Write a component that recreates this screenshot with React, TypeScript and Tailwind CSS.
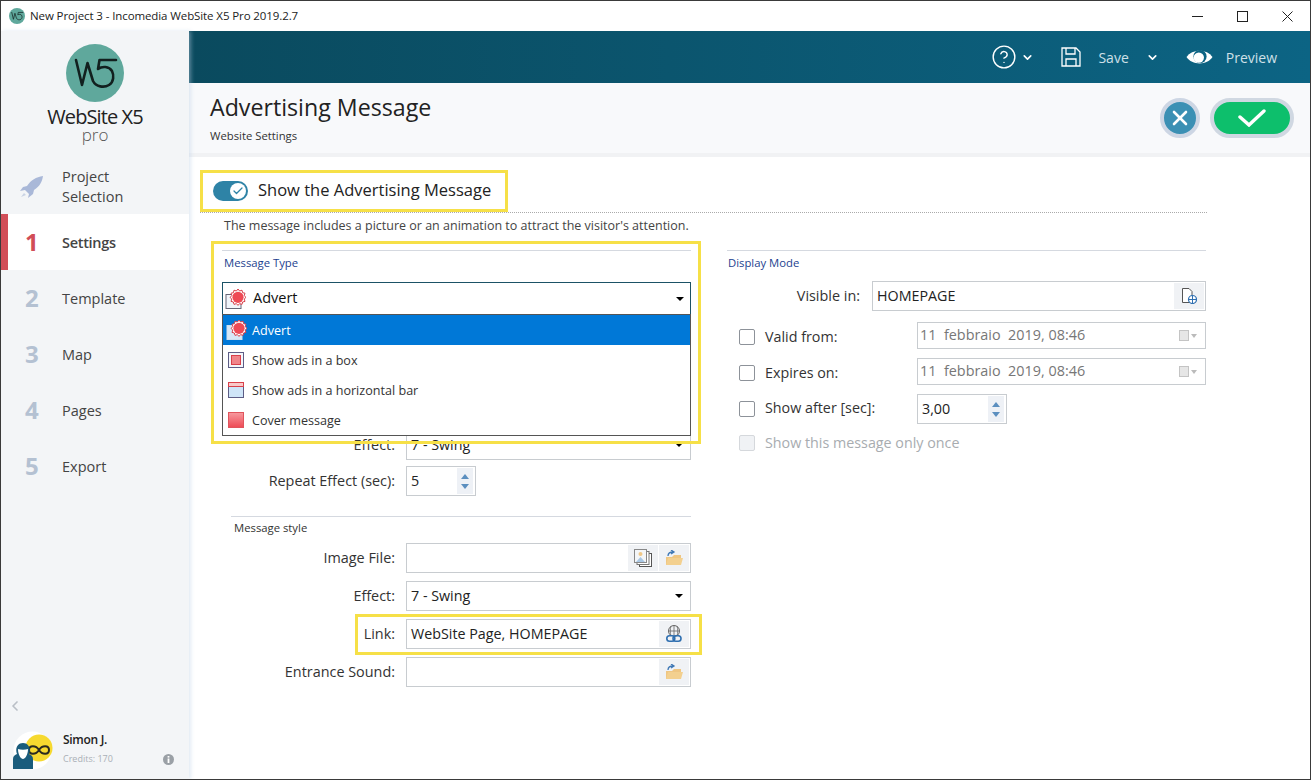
import { ChevronDown, CircleHelp, X, Check, ChevronLeft } from "lucide-react";
import type { ReactNode } from "react";

function LogoMark({ size }: { size: number }) {
  return (
    <svg width={size} height={size} viewBox="0 0 58 58">
      <circle cx="29" cy="29" r="29" fill="#5fa89c" />
      <path
        d="M10 16 L16 41 L21.5 19 L27 37 C30 43 38 44 43 41 C48 38 48 31 46 27 C43 22 36 22 32 25 L33.5 16 H50"
        fill="none"
        stroke="#12201f"
        strokeWidth="2.6"
        strokeLinecap="round"
        strokeLinejoin="round"
      />
    </svg>
  );
}

function Rocket() {
  return (
    <svg width="24" height="24" viewBox="0 0 24 24">
      <path d="M23 1 C16 2 11 5 7 11 L3 12 L0 16 L5 15 L9 19 L8 23 L13 19 L14 15 C20 11 22 7 23 1Z" fill="#a9b8d8" />
      <path d="M4 18 L1 22 L6 20Z" fill="#c9d3e4" />
    </svg>
  );
}

function FolderIcon() {
  return (
    <svg width="18" height="17" viewBox="0 0 18 17">
      <path d="M1 7 H7 L9 5 H16 V15 H1Z" fill="#efc682" />
      <path d="M1 15 L3 8 H18 L16 15Z" fill="#f3d08f" />
      <path d="M3 6 C3 3 5 2 8 2 M6 0 L9 2 L6 4" fill="none" stroke="#3f78b5" strokeWidth="1.3" />
    </svg>
  );
}

function ImageStackIcon() {
  return (
    <svg width="18" height="18" viewBox="0 0 18 18">
      <rect x="5.5" y="4.5" width="12" height="13" fill="#fff" stroke="#555" />
      <rect x="3" y="2.5" width="12" height="13" fill="#fff" stroke="#777" />
      <rect x="0.5" y="0.5" width="12" height="13" fill="#f4f6f8" stroke="#888" />
      <circle cx="6.5" cy="5" r="2" fill="#f0c888" />
      <path d="M2 13 L6.5 8 L11 13Z" fill="#a9c7e4" />
    </svg>
  );
}

function LinkIcon() {
  return (
    <svg width="16" height="18" viewBox="0 0 16 18">
      <circle cx="8" cy="6" r="5.5" fill="none" stroke="#666" />
      <path d="M2.5 6 H13.5 M8 .5 V11 M5 1 C4 4 4 8 5 11 M11 1 C12 4 12 8 11 11" fill="none" stroke="#666" strokeWidth=".8" />
      <rect x="0.8" y="10.8" width="8" height="5.5" rx="2.7" fill="#f0f2f5" stroke="#2f6fb0" strokeWidth="1.6" />
      <rect x="7" y="10.8" width="8" height="5.5" rx="2.7" fill="none" stroke="#2f6fb0" strokeWidth="1.6" />
    </svg>
  );
}

function PageWebIcon() {
  return (
    <svg width="16" height="16" viewBox="0 0 16 16">
      <path d="M1.5 .5 H8 L11 3.5 V14.5 H1.5Z" fill="#fff" stroke="#555" />
      <circle cx="11.5" cy="11.5" r="4" fill="#fff" stroke="#2f6fb0" strokeWidth="1.2" />
      <path d="M7.5 11.5 H15.5 M11.5 7.5 V15.5" stroke="#2f6fb0" />
    </svg>
  );
}

function AdvertIcon({ selected }: { selected?: boolean }) {
  return (
    <svg width="22" height="22" viewBox="0 0 22 22" className="shrink-0">
      <rect x="1" y="6.5" width="15" height="14" fill={selected ? "#d8e8f6" : "#f0f5fa"} stroke={selected ? "#cfe0f0" : "#667"} />
      <path
        d="M13 1 L14.6 3 L17 2.2 L17.6 4.7 L20 5.2 L19.2 7.6 L21 9.4 L19.2 11 L20 13.4 L17.6 14 L17 16.4 L14.6 15.6 L13 17.4 L11.4 15.6 L9 16.4 L8.4 14 L6 13.4 L6.8 11 L5 9.4 L6.8 7.6 L6 5.2 L8.4 4.7 L9 2.2 L11.4 3Z"
        fill="#fff"
        stroke="#d9404a"
      />
      <circle cx="13" cy="9.3" r="5.6" fill="#ee4a55" />
    </svg>
  );
}

function BoxIcon() {
  return (
    <svg width="16" height="16" viewBox="0 0 16 16" className="shrink-0">
      <rect x=".5" y=".5" width="15" height="15" fill="#f3f5fa" stroke="#5d5d85" />
      <rect x="3.5" y="3.5" width="9" height="9" fill="#f0848a" stroke="#d9404a" />
    </svg>
  );
}

function BarIcon() {
  return (
    <svg width="16" height="16" viewBox="0 0 16 16" className="shrink-0">
      <rect x=".5" y=".5" width="15" height="15" fill="#cfe5f8" stroke="#5d5d85" />
      <rect x=".5" y=".5" width="15" height="4" fill="#f9c9c9" stroke="#d9404a" />
    </svg>
  );
}

function CoverIcon() {
  return (
    <svg width="16" height="16" viewBox="0 0 16 16" className="shrink-0">
      <defs>
        <linearGradient id="coverFill" x1="0" y1="0" x2="0" y2="1">
          <stop offset="0" stopColor="#f79a9f" />
          <stop offset="1" stopColor="#ee4a55" />
        </linearGradient>
      </defs>
      <rect x=".5" y=".5" width="15" height="15" fill="url(#coverFill)" stroke="#e0545c" />
    </svg>
  );
}

function UserBadge() {
  return (
    <svg width="41" height="39" viewBox="0 0 41 39">
      <circle cx="20.5" cy="19.5" r="19" fill="#fff" />
      <circle cx="27" cy="17" r="13.5" fill="#f6d92f" />
      <path d="M27 19 C24 14 17 14 17 19 C17 24 24 24 27 19 C30 14 37 14 37 19 C37 24 30 24 27 19Z" fill="none" stroke="#2a2a20" strokeWidth="2" />
      <path d="M1 38 V28 C1 25 3 24 5 23 C3 18 5 12 11 12 C17 12 19 18 17 23 C19 24 21 25 21 28 V38Z" fill="#1a5c7c" />
      <path d="M6 18 C6 24 9 28 11 28 C13 28 16 24 16 18 C13 19 9 19 6 18Z" fill="#fff" />
    </svg>
  );
}

function InfoDot() {
  return (
    <svg width="11" height="11" viewBox="0 0 11 11" className="shrink-0">
      <circle cx="5.5" cy="5.5" r="5.5" fill="#9aa0a6" />
      <rect x="4.6" y="2" width="1.8" height="1.6" fill="#fff" />
      <rect x="4.6" y="4.5" width="1.8" height="4.5" fill="#fff" />
    </svg>
  );
}

function EyeIcon() {
  return (
    <svg width="27" height="18" viewBox="0 0 27 18" className="ml-[27px]">
      <path d="M.5 9 C6 .5 21 .5 26.5 9 C21 17.5 6 17.5 .5 9Z" fill="#fff" />
      <circle cx="14" cy="8.5" r="6.6" fill="#0c6484" />
      <circle cx="12.8" cy="9.6" r="5.2" fill="#fff" />
    </svg>
  );
}

function Stepper() {
  return (
    <div className="flex h-[26px] w-[16px] flex-col items-center justify-center gap-[5px] bg-[#eef1f6]">
      <div className="h-0 w-0 border-x-[4px] border-b-[5px] border-x-transparent border-b-[#5b8fbf]" />
      <div className="h-0 w-0 border-x-[4px] border-t-[5px] border-x-transparent border-t-[#5b8fbf]" />
    </div>
  );
}

function Caret() {
  return <div className="h-0 w-0 border-x-[4px] border-t-[4px] border-x-transparent border-t-black" />;
}

function IconBtn({ children }: { children: ReactNode }) {
  return <div className="flex h-[26px] w-[30px] items-center justify-center bg-[#f0f2f5]">{children}</div>;
}

function Row({ label, children, className = "" }: { label: string; children: ReactNode; className?: string }) {
  return (
    <div className={`flex h-[30px] items-center gap-[11px] ${className}`}>
      <div className="w-[173px] pb-[1px] text-right text-[14.4px] text-[#333]">{label}</div>
      {children}
    </div>
  );
}

function Field({ children, value }: { children?: ReactNode; value?: string }) {
  return (
    <div className="flex h-[30px] w-[285px] items-center justify-between border border-[#c8ccd0] pr-px pl-1 text-[14.3px] text-[#222]">
      <span className="pb-[1px]">{value}</span>
      <div className="flex gap-px">{children}</div>
    </div>
  );
}

function DateRow({ label }: { label: string }) {
  return (
    <div className="flex h-[27px] items-center">
      <div className="mt-[2px] ml-[12px] h-4 w-4 rounded-[2px] border border-[#8d9299] bg-white" />
      <div className="ml-[10px] w-[152px] pt-[2px] text-[14.3px] text-[#333]">{label}</div>
      <div className="flex h-[27px] w-[289px] items-center justify-between border border-[#c8ccd0] pr-2 pl-[2px] text-[14.4px] text-[#777]">
        <span className="pb-[1px] whitespace-pre">11  febbraio  2019, 08:46</span>
        <div className="flex items-center gap-[2px]">
          <div className="h-[11px] w-[10px] border border-[#c4c4c4] bg-[#e6e6e6]" />
          <div className="h-0 w-0 border-x-[3px] border-t-[4px] border-x-transparent border-t-[#bbb]" />
        </div>
      </div>
    </div>
  );
}

const steps = [
  { n: "1", label: "Settings", active: true },
  { n: "2", label: "Template" },
  { n: "3", label: "Map" },
  { n: "4", label: "Pages" },
  { n: "5", label: "Export" },
];

export default function App() {
  return (
    <div className="flex h-[780px] w-[1311px] flex-col overflow-hidden border border-[#3a3a3a] bg-white [font-family:'Open_Sans','Noto_Sans',sans-serif]">
      {/* title bar */}
      <div className="flex h-[30px] shrink-0 items-center pl-2 text-[11.5px] tracking-[-0.1px] text-[#222]">
        <LogoMark size={16} />
        <span className="ml-[5px]">New Project 3 - Incomedia WebSite X5 Pro 2019.2.7</span>
        <div className="ml-auto flex items-center gap-[34px] pr-[17px]">
          <svg width="11" height="11" viewBox="0 0 11 11" stroke="#222" fill="none"><path d="M0 5.5 H11" /></svg>
          <svg width="11" height="11" viewBox="0 0 11 11" stroke="#222" fill="none"><rect x=".5" y=".5" width="10" height="10" /></svg>
          <svg width="11" height="11" viewBox="0 0 11 11" stroke="#222" fill="none"><path d="M.5 .5 L10.5 10.5 M10.5 .5 L.5 10.5" /></svg>
        </div>
      </div>

      <div className="flex min-h-0 flex-1">
        {/* sidebar */}
        <div className="z-10 flex w-[188px] shrink-0 flex-col bg-[#f3f5f7] shadow-[2px_0_4px_rgba(190,210,230,0.45)]">
          <div className="flex h-[126px] flex-col items-center pt-[13px]">
            <LogoMark size={58} />
            <div className="mt-[4px] text-[20px] leading-[22px] tracking-[-0.9px] text-[#222]">WebSite X5</div>
            <div className="text-[17px] leading-[14px] font-light text-[#555]">pro</div>
          </div>
          <div className="flex h-[57px] items-center pt-[2px] pl-[19px] text-[14.5px] leading-[20px] text-[#444]">
            <Rocket />
            <div className="ml-[18px]">
              Project
              <br />
              Selection
            </div>
          </div>
          {steps.map((s) => (
            <div
              key={s.n}
              className={`flex h-[56px] items-center text-[14.5px] ${
                s.active ? "border-l-[7px] border-[#d14d57] bg-white font-semibold tracking-[-0.3px] text-[#444]" : "pl-[7px] text-[#444]"
              }`}
            >
              <div className={`w-[54px] pl-[17px] text-[24px] font-bold ${s.active ? "text-[#d14d57]" : "text-[#b4c1d2]"}`}>{s.n}</div>
              <span className="pt-[2px]">{s.label}</span>
            </div>
          ))}
          <div className="mt-auto pb-[9px] pl-[6px]">
            <ChevronLeft size={16} strokeWidth={2.5} className="text-[#b9bfc6]" />
            <div className="mt-[17px] flex items-center pl-[5px]">
              <UserBadge />
              <div className="ml-[10px] flex-1 pr-[15px] pb-[3px]">
                <div className="text-[12px] leading-[16px] font-semibold tracking-[-0.3px] text-[#222]">Simon J.</div>
                <div className="mt-[4px] flex items-center justify-between text-[9px] leading-[14px] text-[#aab0b6]">
                  Credits: 170
                  <InfoDot />
                </div>
              </div>
            </div>
          </div>
        </div>

        {/* main */}
        <div className="flex min-w-0 flex-1 flex-col">
          <div className="flex h-[52px] shrink-0 items-center justify-end bg-gradient-to-r from-[#0a4a5e] to-[#0c6484] pr-[33px] text-[14px] text-[#cfe0e8]">
            <CircleHelp size={26} strokeWidth={1.3} className="text-white" />
            <ChevronDown size={13} strokeWidth={3} className="ml-[4px] text-white" />
            <svg width="20" height="20" viewBox="0 0 20 20" className="ml-[27px]" fill="none" stroke="#fff" strokeWidth="1.3">
              <path d="M1 1 H15 L19 5 V19 H1Z M5 1 V7 H14 V1 M5 19 V12 H15 V19" />
            </svg>
            <span className="ml-[17px]">Save</span>
            <ChevronDown size={13} strokeWidth={3} className="ml-[17px] text-white" />
            <EyeIcon />
            <span className="ml-[13px]">Preview</span>
          </div>

          <div className="flex h-[74px] shrink-0 items-center justify-between border-b-[4px] border-[#f1f2f4] bg-[#f8f9fb] pr-[16px] pl-[21px]">
            <div className="-mt-[2px]">
              <div className="text-[23.2px] leading-[30px] text-[#222]">Advertising Message</div>
              <div className="mt-[6px] text-[11.3px] leading-[15px] text-[#333]">Website Settings</div>
            </div>
            <div className="flex items-center gap-[10px]">
              <div className="flex h-[40px] w-[40px] items-center justify-center rounded-full border-[4px] border-[#cdd6e4] bg-[#3b90b4]">
                <X size={24} strokeWidth={2.6} className="text-white" />
              </div>
              <div className="flex h-[40px] w-[84px] items-center justify-center rounded-full border-[4px] border-[#d0d8e2] bg-[#0dbf6c]">
                <svg width="28" height="18" viewBox="0 0 28 18" fill="none" stroke="#fff" strokeWidth="3.4" strokeLinecap="round">
                  <path d="M2 8 L11 16 L26 2" />
                </svg>
              </div>
            </div>
          </div>

          <div className="min-h-0 flex-1 pt-[13px] pl-[11px]">
            <div className="flex h-[42px] w-[308px] items-center border-[3px] border-[#f6e047] pl-[10px] text-[16.5px] text-[#222]">
              <div className="relative h-5 w-[35px] rounded-full bg-[#2e83a6]">
                <div className="absolute top-[2px] right-[2px] flex h-4 w-4 items-center justify-center rounded-full bg-white">
                  <Check size={12} strokeWidth={2.5} className="text-[#2e83a6]" />
                </div>
              </div>
              <span className="ml-[10px] pb-[2px]">Show the Advertising Message</span>
            </div>
            <div className="w-[1007px] border-t border-dotted border-[#aaa]" />
            <div className="mt-[4px] pl-[24px] text-[12.5px] leading-[17px] text-[#444]">
              The message includes a picture or an animation to attract the visitor's attention.
            </div>

            <div className="mt-[16px] flex">
              {/* left column */}
              <div className="ml-[22px] w-[469px]">
                <div className="relative">
                  <div className="absolute -top-[9px] -right-[10px] -left-[11px] z-20 h-[203px] border-[3px] border-[#f6e047]" />
                  <div className="border-t border-[#d5d9e0] pt-[4px] pl-[2px] text-[11.3px] leading-[16px] text-[#1d3f8f]">Message Type</div>
                  <div className="mt-[11px] flex h-[33px] items-center justify-between border border-[#1b5266] pr-[6px] pl-[2px] text-[14.5px] text-[#111]">
                    <div className="flex items-center gap-[6px]">
                      <AdvertIcon />
                      <span className="pb-[2px]">Advert</span>
                    </div>
                    <Caret />
                  </div>
                  <div className="absolute top-[64px] right-0 left-0 z-10 border border-[#555] bg-white text-[12.6px] text-[#333]">
                    <div className="flex h-[30px] items-center gap-[4px] bg-[#0078d7] pl-[3px] text-white">
                      <AdvertIcon selected />
                      <span className="pt-[2px]">Advert</span>
                    </div>
                    <div className="flex h-[30px] items-center gap-[8px] pl-[5px]"><BoxIcon /><span className="pt-[2px]">Show ads in a box</span></div>
                    <div className="flex h-[30px] items-center gap-[8px] pl-[5px]"><BarIcon /><span className="pt-[2px]">Show ads in a horizontal bar</span></div>
                    <div className="flex h-[30px] items-center gap-[8px] pl-[5px]"><CoverIcon /><span className="pt-[2px]">Cover message</span></div>
                  </div>
                </div>

                <Row label="Effect:" className="mt-[115px]">
                  <Field value="7 - Swing"><div className="mr-[6px]"><Caret /></div></Field>
                </Row>
                <Row label="Repeat Effect (sec):" className="mt-[6px]">
                  <div className="flex h-[30px] w-[70px] items-center justify-between border border-[#c8ccd0] pr-[2px] pl-1 text-[14.3px] text-[#222]">
                    <span className="pb-[1px]">5</span>
                    <Stepper />
                  </div>
                </Row>

                <div className="mt-[20px] ml-[9px] border-t border-[#d5d9e0] pt-[3px] pl-[3px] text-[11.3px] leading-[16px] text-[#333]">Message style</div>
                <Row label="Image File:" className="mt-[7px]">
                  <Field>
                    <IconBtn><ImageStackIcon /></IconBtn>
                    <IconBtn><FolderIcon /></IconBtn>
                  </Field>
                </Row>
                <Row label="Effect:" className="mt-[8px]">
                  <Field value="7 - Swing"><div className="mr-[6px]"><Caret /></div></Field>
                </Row>
                <div className="relative mt-[8px]">
                  <div className="absolute -top-[5px] right-[-11px] left-[133px] h-[41px] border-[3px] border-[#f6e047]" />
                  <Row label="Link:">
                    <Field value="WebSite Page, HOMEPAGE">
                      <IconBtn><LinkIcon /></IconBtn>
                    </Field>
                  </Row>
                </div>
                <Row label="Entrance Sound:" className="mt-[8px]">
                  <Field>
                    <IconBtn><FolderIcon /></IconBtn>
                  </Field>
                </Row>
              </div>

              {/* right column */}
              <div className="ml-[36px] w-[479px]">
                <div className="border-t border-[#d5d9e0] pt-[4px] pl-px text-[11.3px] leading-[16px] text-[#1d3f8f]">Display Mode</div>
                <div className="mt-[10px] flex h-[30px] items-center">
                  <div className="w-[133px] pb-[1px] text-right text-[14.4px] text-[#333]">Visible in:</div>
                  <div className="ml-[12px] flex h-[30px] w-[334px] items-center justify-between border border-[#c8ccd0] pr-px pl-1 text-[14.3px] text-[#222]">
                    <span className="pb-[1px]">HOMEPAGE</span>
                    <IconBtn><PageWebIcon /></IconBtn>
                  </div>
                </div>
                <div className="mt-[11px]"><DateRow label="Valid from:" /></div>
                <div className="mt-[9px]"><DateRow label="Expires on:" /></div>
                <div className="mt-[9px] flex h-[30px] items-center">
                  <div className="ml-[12px] h-4 w-4 rounded-[2px] border border-[#8d9299] bg-white" />
                  <div className="ml-[10px] w-[152px] pb-[3px] text-[14.3px] text-[#333]">Show after [sec]:</div>
                  <div className="flex h-[30px] w-[90px] items-center justify-between border border-[#c8ccd0] pr-[2px] pl-1 text-[14.3px] text-[#222]">
                    <span className="pb-[1px]">3,00</span>
                    <Stepper />
                  </div>
                </div>
                <div className="mt-[10px] flex h-[18px] items-center">
                  <div className="ml-[12px] h-4 w-4 rounded-[2px] border border-[#d5d8dc] bg-[#f0f2f5]" />
                  <div className="ml-[10px] pb-[1px] text-[14.3px] text-[#a8acb0]">Show this message only once</div>
                </div>
              </div>
            </div>
          </div>
        </div>
      </div>
    </div>
  );
}
